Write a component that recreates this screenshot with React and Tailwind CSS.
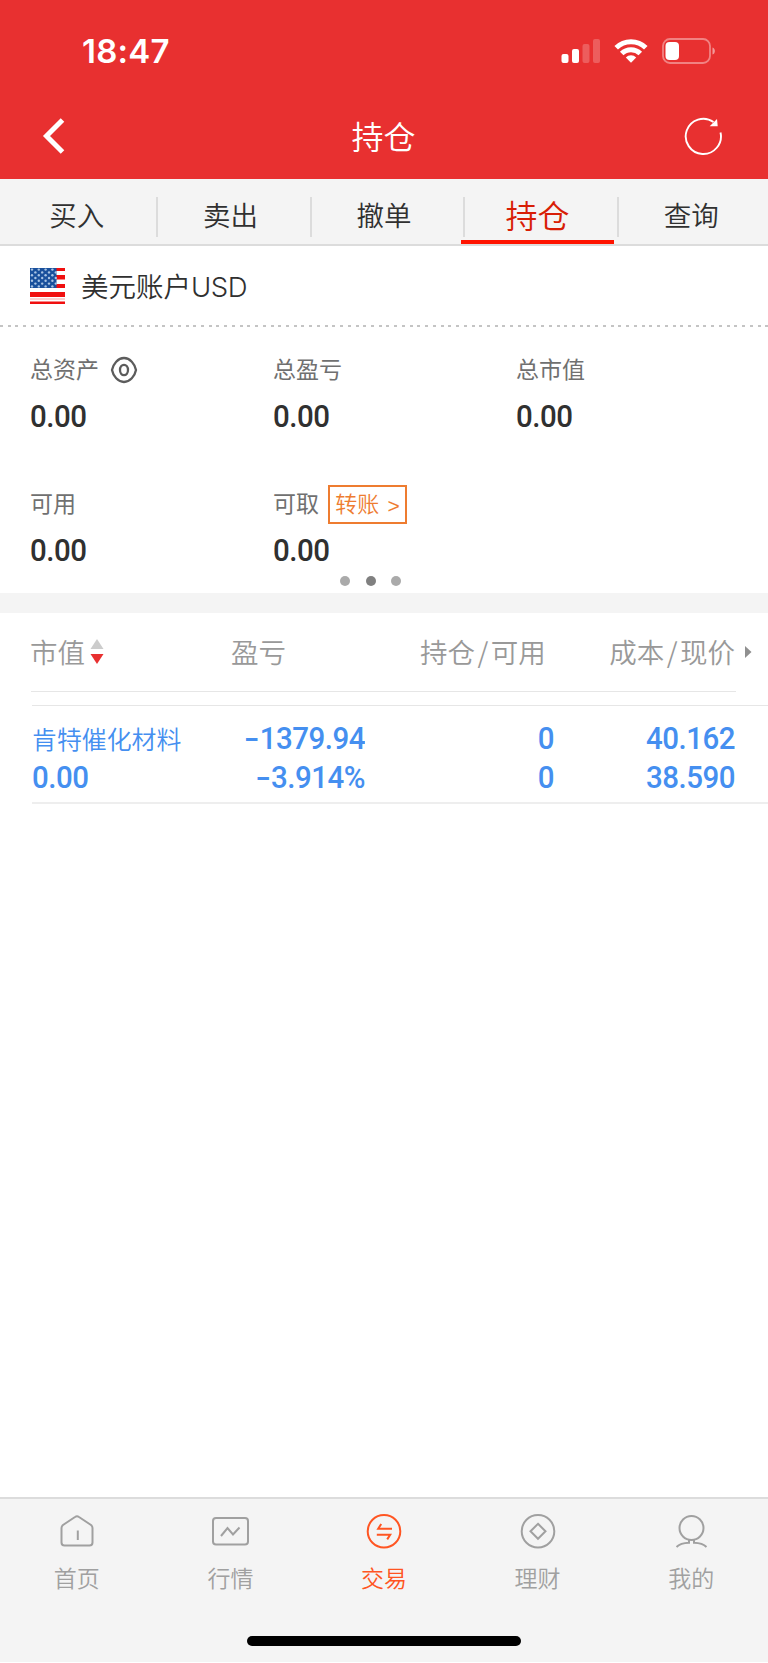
const tabs = ['买入', '卖出', '撤单', '持仓', '查询']

const stars = [0, 1, 2, 3, 4, 5, 6].flatMap((row) =>
  [0, 1, 2, 3].map((col) => ({ x: 2 + col * 6.8 + (row % 2) * 3.4, y: 1.6 + row * 2.8 }))
)

const cjk = 'font-["Noto_Sans_CJK_SC",sans-serif]'

function StatusBar() {
  return (
    <div className="flex h-[102px] items-center justify-between pl-[82px] pr-[52px]">
      <span className={'font-["Inter",sans-serif] text-[33px] font-semibold leading-none tracking-[0.2px]'}>18:47</span>
      <div className="flex items-center gap-[14px]">
        <svg width="40" height="26" viewBox="0 0 40 26" fill="#fff">
          <rect x="1.5" y="16" width="7" height="9" rx="2" />
          <rect x="12" y="11" width="7" height="14" rx="2" />
          <rect x="22.5" y="6" width="7" height="19" rx="2" opacity=".22" />
          <rect x="33" y="1" width="7" height="24" rx="2" opacity=".22" />
        </svg>
        <svg width="34" height="26" viewBox="0 0 34 26" fill="none" stroke="#fff" strokeWidth="5">
          <path d="M2.2 9.8a21 21 0 0 1 29.6 0" />
          <path d="M7.7 15.5a13.2 13.2 0 0 1 18.6 0" />
          <path d="M11.8 19.4a7.4 7.4 0 0 1 10.4 0L17 24.8z" fill="#fff" stroke="none" />
        </svg>
        <svg width="54" height="26" viewBox="0 0 54 26">
          <rect x="1" y="1" width="47" height="24" rx="7" fill="none" stroke="#fff" strokeOpacity=".4" strokeWidth="1.8" />
          <rect x="3.5" y="4" width="13.5" height="18" rx="4" fill="#fff" />
          <path d="M50.5 9.5c3.2 1 3.2 6 0 7z" fill="#fff" fillOpacity=".5" />
        </svg>
      </div>
    </div>
  )
}

function Flag() {
  return (
    <svg width="35" height="36" viewBox="0 0 35 36">
      <rect width="35" height="36" fill="#fff" />
      <g fill="#f00f0f">
        <rect y="0" width="35" height="3" />
        <rect y="7" width="35" height="4.5" />
        <rect y="16" width="35" height="4" />
        <rect y="24" width="35" height="5" />
        <rect y="30.5" width="35" height="1" opacity=".4" />
        <rect y="33.5" width="35" height="2.5" />
      </g>
      <rect width="26.5" height="20" fill="#19509c" />
      {stars.map((s, i) => (
        <circle key={i} cx={s.x} cy={s.y} r="1.2" fill="#a9c4e4" />
      ))}
    </svg>
  )
}

function Num({ value, left }) {
  const negative = value.startsWith('-')
  return (
    <span
      className={`inline-block scale-x-95 whitespace-nowrap font-["Roboto",sans-serif] text-[31px] font-medium leading-[31px] tracking-[-0.5px] ${
        left ? 'origin-left text-left' : 'origin-right text-right'
      }`}
    >
      {negative && <span className="mr-[2px] inline-block w-[13px] scale-x-150 text-center">-</span>}
      {negative ? value.slice(1) : value}
    </span>
  )
}

function Stat({ label, children }) {
  return (
    <div>
      <div className="flex h-10 items-center text-[23px] leading-none text-[#707070]">
        <span className="mb-[4px]">{label}</span>
        {children}
      </div>
      <div className="mt-[11px] flex h-[32px] text-[#303030]">
        <Num value="0.00" left />
      </div>
    </div>
  )
}

function NavItem({ label, active, children }) {
  return (
    <div className={`flex flex-1 flex-col items-center ${active ? 'text-[#ff5522]' : 'text-[#a0a0a0]'}`}>
      <svg width="40" height="40" viewBox="0 0 40 40" fill="none" stroke="currentColor" strokeWidth="2">
        {children}
      </svg>
      <span className="mt-[14px] text-[23px] font-[350] leading-[24px]">{label}</span>
    </div>
  )
}

export default function App() {
  return (
    <div className={`flex h-[1663px] w-[768px] flex-col bg-white ${cjk}`}>
      <header className="h-[179px] shrink-0 bg-[#e83030] text-white">
        <StatusBar />
        <div className="grid h-[68px] grid-cols-[1fr_auto_1fr] items-center pl-[42px] pr-[45px]">
          <svg width="24" height="36" viewBox="0 0 24 36" fill="none" stroke="#fff" strokeWidth="5">
            <path d="M20.5 2 4.5 18l16 16" />
          </svg>
          <h1 className="mb-[3px] ml-[2px] text-[32px] font-[350] leading-none">持仓</h1>
          <svg className="justify-self-end" width="40" height="40" viewBox="0 0 40 40" fill="none" stroke="#fff" strokeWidth="1.9">
            <path d="M37.5 16.5A17.6 17.6 0 1 1 30.5 6" />
            <path d="M34 3l.7 7.2h-8z" fill="#fff" stroke="none" />
          </svg>
        </div>
      </header>

      <nav className="flex h-[67px] shrink-0 border-b-2 border-[#dcdcdc] bg-[#f4f4f4] text-[#303030]">
        {tabs.map((tab, i) => (
          <div key={tab} className="relative flex flex-1 items-center justify-center">
            {i > 0 && <i className="absolute left-[2.5px] top-[18px] h-[40px] w-[2px] bg-[#dcdcdc]" />}
            {tab === '持仓' ? (
              <>
                <span className="mt-[4px] text-[32px] font-[350] leading-none text-[#d81e06]">{tab}</span>
                <i className="absolute bottom-0 left-0 h-1 w-full bg-[#ff1400]" />
              </>
            ) : (
              <span className="mt-[6px] text-[27.5px] font-[350] leading-none">{tab}</span>
            )}
          </div>
        ))}
      </nav>

      <div className="flex h-[79px] shrink-0 items-center gap-[16px] pl-[30px] text-[#303030]">
        <Flag />
        <span className="mt-[2px] text-[27.5px] font-[350] leading-none">
          美元账户<span className={'font-["Inter",sans-serif] font-light tracking-[-0.4px]'}>USD</span>
        </span>
      </div>
      <div className="h-[2px] shrink-0 bg-[repeating-linear-gradient(90deg,#c4c4c4_0_3px,transparent_3px_7.73px)]" />

      <section className="h-[266px] shrink-0 pl-[30px] pt-[23px]">
        <div className="grid grid-cols-[243px_243px_1fr] gap-y-[51px]">
          <Stat label="总资产">
            <svg className="ml-[11px]" width="28" height="28" viewBox="0 0 28 28" fill="none" stroke="#5c5c5c" strokeWidth="2.3" strokeLinejoin="round">
              <path d="M2 14C3.2 7.8 8 2 14 2S24.8 7.8 26 14C24.8 20.2 20 26 14 26S3.2 20.2 2 14z" />
              <ellipse cx="14" cy="14" rx="4" ry="5.2" />
            </svg>
          </Stat>
          <Stat label="总盈亏" />
          <Stat label="总市值" />
          <Stat label="可用" />
          <Stat label="可取">
            <span className="ml-[9px] flex h-[39px] w-[79px] items-center justify-center gap-[8px] border-2 border-[#ee7c30] text-[22px] font-[350] text-[#ee7c30]">
              <span className="mb-[4px]">转账</span>
              <span className={'mt-[2px] font-["Liberation_Sans",sans-serif] text-[21px]'}>&gt;</span>
            </span>
          </Stat>
        </div>
        <div className="mt-[9px] flex gap-[15.5px] pl-[310px]">
          <i className="size-[10px] rounded-full bg-[#aaa]" />
          <i className="size-[10px] rounded-full bg-[#808080]" />
          <i className="size-[10px] rounded-full bg-[#aaa]" />
        </div>
      </section>

      <div className="h-5 shrink-0 bg-[#f4f4f4]" />

      <section>
        <div className="ml-[31px] mr-[32px] grid h-[79px] grid-cols-[200px_189px_1fr_auto] items-center border-b border-[#e6e6e6] text-[27.5px] font-[350] leading-none text-[#999]">
          <div className="-ml-px flex items-center gap-[5px]">
            市值
            <svg width="14" height="26" viewBox="0 0 14 26">
              <path d="M7 0l6.5 10H.5z" fill="#ccc" />
              <path d="M.5 15h13L7 25z" fill="#e83030" />
            </svg>
          </div>
          <span>盈亏</span>
          <span>
            持仓<span className="mx-[2.5px]">/</span>可用
          </span>
          <div className="relative mr-px">
            成本<span className="mx-[2.5px]">/</span>现价
            <svg className="absolute -right-[17px] top-[7px]" width="7" height="14" viewBox="0 0 7 14" fill="#909090">
              <path d="M0 1v12l6.5-6z" />
            </svg>
          </div>
        </div>
        <div className="ml-[32px] mt-[13px] grid h-[99px] grid-cols-[148px_185px_189px_181px] content-start gap-y-[8px] border-b-2 border-t border-b-[#eee] border-t-[#e6e6e6] pt-[17px] text-right leading-[31px] text-[#458ff0]">
          <span className="h-[31px] whitespace-nowrap text-left text-[24.9px] font-[350]">肯特催化材料</span>
          <Num value="-1379.94" />
          <Num value="0" />
          <Num value="40.162" />
          <Num value="0.00" left />
          <Num value="-3.914%" />
          <Num value="0" />
          <Num value="38.590" />
        </div>
      </section>

      <footer className="mt-auto mb-px h-[165px] shrink-0 border-t-2 border-[#dcdcdc] bg-[#f4f4f4]">
        <div className="flex pt-[12px]">
          <NavItem label="首页">
            <path d="M4.5 17c0-1.5.5-2.2 1.5-3L18 6c1.4-1 2.6-1 4 0l12 8c1 .8 1.5 1.5 1.5 3V31.5c0 2-1 3-3 3h-25c-2 0-3-1-3-3zM20.8 19.5V29" />
          </NavItem>
          <NavItem label="行情">
            <rect x="3" y="7" width="35" height="26.5" rx="3" />
            <path d="M11 25l6.5-8 5.5 6.5 6.5-7" />
          </NavItem>
          <NavItem label="交易" active>
            <circle cx="20" cy="20.3" r="16.3" />
            <path d="M28 17.7H14.2l3-4.7M12.8 23.7h13.4l-3 4.7" />
          </NavItem>
          <NavItem label="理财">
            <circle cx="20" cy="20.3" r="16.3" />
            <path d="M20 12.8l7.5 7.5-7.5 7.5-7.5-7.5z" />
          </NavItem>
          <NavItem label="我的">
            <circle cx="20.5" cy="17" r="12" />
            <path d="M5.5 36c2.5-2.5 6-4 12.5-4.2V29M35.5 36c-2.5-2.5-6-4-12.5-4.2V29" />
          </NavItem>
        </div>
        <div className="mx-auto mt-[47px] h-[10px] w-[274px] rounded-full bg-black" />
      </footer>
    </div>
  )
}
